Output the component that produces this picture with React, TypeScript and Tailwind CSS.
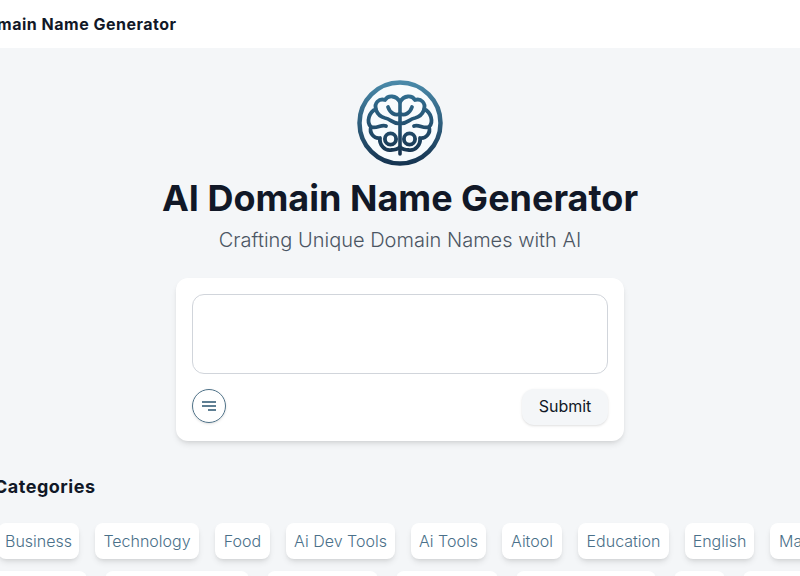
const row1 = [
  { name: "Business", width: "w-[81px]" },
  { name: "Technology", width: "w-[104px]" },
  { name: "Food", width: "w-[55px]" },
  { name: "Ai Dev Tools", width: "w-[109px]" },
  { name: "Ai Tools", width: "w-[75px]" },
  { name: "Aitool", width: "w-[60px]" },
  { name: "Education", width: "w-[91px]" },
  { name: "English", width: "w-[69px]" },
  { name: "Marketing", width: "w-[92px]" },
];
const row2Widths = ["w-[96px]", "w-[144px]", "w-[111px]", "w-[102px]", "w-[140px]", "w-[51px]", "w-[90px]"];

function BrainLogo() {
  return (
    <svg width="86" height="86" viewBox="0 0 86 86" fill="none">
      <defs>
        <linearGradient id="ring" gradientUnits="userSpaceOnUse" x1="0" y1="0" x2="0" y2="86">
          <stop offset="0" stopColor="#4a8bab" />
          <stop offset="1" stopColor="#14324f" />
        </linearGradient>
        <linearGradient id="brain" gradientUnits="userSpaceOnUse" x1="0" y1="16" x2="0" y2="74">
          <stop offset="0" stopColor="#2f6c8e" />
          <stop offset="1" stopColor="#17344f" />
        </linearGradient>
        <g id="lobe" stroke="url(#brain)" strokeWidth="3.8" strokeLinecap="round" strokeLinejoin="round">
          <path d="M43 22C39 15 31 15 28 20C22 18 17 23 19 29C12 32 9 42 14 47C12 53 17 59 23 58C22 65 28 71 34 70C38 70 41 69 43 67" />
          <path d="M43 34C38 36 33 33 31 27" />
          <path d="M43 43C37 45 34 39 28 38C24 37 21 35 19 30" />
          <path d="M14 47C20 49 24 44 29 46" />
          <circle cx="33.5" cy="59" r="5.6" />
        </g>
      </defs>
      <circle cx="43" cy="43" r="40.5" fill="#f7fbfd" stroke="url(#ring)" strokeWidth="4.5" />
      <use href="#lobe" />
      <use href="#lobe" transform="matrix(-1 0 0 1 86 0)" />
      <path d="M43 22V74" stroke="url(#brain)" strokeWidth="3.6" strokeLinecap="round" />
    </svg>
  );
}

export default function App() {
  return (
    <div className="h-[576px] overflow-hidden bg-[#f4f6f8] font-['Inter',sans-serif]">
      <header className="h-12 bg-white flex items-center">
        <span className="ml-[-47px] text-base font-bold tracking-[0.5px] text-[#111827] whitespace-nowrap">AI Domain Name Generator</span>
      </header>

      <main className="flex flex-col items-center pt-8">
        <BrainLogo />
        <h1 className="mt-3 text-[36px] leading-10 font-bold text-[#111827] whitespace-nowrap">AI Domain Name Generator</h1>
        <p className="mt-2 text-xl leading-7 font-light text-[#4b5563] whitespace-nowrap">Crafting Unique Domain Names with AI</p>

        <div className="mt-6 w-[448px] h-[163px] bg-white rounded-xl shadow-md p-4 flex flex-col">
          <div className="h-20 rounded-xl border border-[#d1d5db]" />
          <div className="mt-[15px] flex items-start justify-between">
            <button className="w-[34px] h-[34px] rounded-full border border-[#4f7288] shadow-sm flex flex-col items-center justify-center gap-[2px]">
              <span className="block w-[14px] h-[2px] bg-[#5f7f93]" />
              <span className="block w-[14px] h-[2px] bg-[#5f7f93]" />
              <span className="block w-[8px] h-[2px] bg-[#5f7f93] ml-[6px]" />
            </button>
            <button className="w-[86px] h-9 pb-[2px] rounded-xl bg-[#f4f6f8] shadow-sm text-base text-[#111827]">Submit</button>
          </div>
        </div>
      </main>

      <section className="mt-8">
        <h2 className="ml-[-6px] text-lg leading-7 font-bold tracking-[0.5px] text-[#111827] whitespace-nowrap">Categories</h2>
        <div className="mt-[22px] ml-[-2px] flex gap-4 w-[900px]">
          {row1.map((item) => (
            <span key={item.name} className={`h-9 shrink-0 flex items-center justify-center rounded-lg bg-white shadow-md text-base font-light text-[#4a7089] whitespace-nowrap ${item.width}`}>
              {item.name}
            </span>
          ))}
        </div>
        <div className="mt-3 ml-[-9px] flex gap-[18px] w-[900px]">
          {row2Widths.map((width, i) => (
            <span key={i} className={`h-9 shrink-0 rounded-lg bg-white shadow-md ${width}`} />
          ))}
        </div>
      </section>
    </div>
  );
}
